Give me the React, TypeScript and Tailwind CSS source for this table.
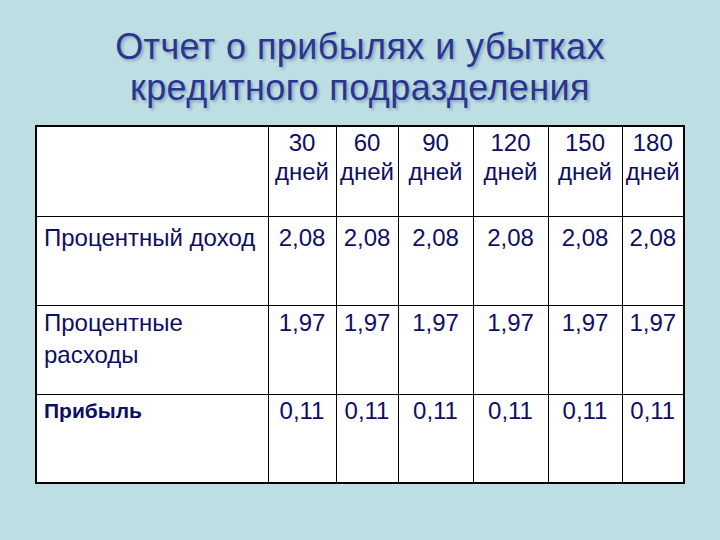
const cols = [
  { n: '30', w: 'w-[68px]' },
  { n: '60', w: 'w-[62px]' },
  { n: '90', w: 'w-[75px]' },
  { n: '120', w: 'w-[75px]' },
  { n: '150', w: 'w-[74px]' },
  { n: '180', w: 'w-[62px]' },
]

// pad = top padding + line height for every cell in the row
const rows = [
  { label: <>Процентный доход</>, value: '2,08', pad: 'pt-[7px] leading-[27px]', labelCls: '' },
  { label: <>Процентные<br />расходы</>, value: '1,97', pad: 'pt-[1px] leading-[32px]', labelCls: '' },
  { label: <>Прибыль</>, value: '0,11', pad: 'pt-[2px] leading-[27px]', labelCls: 'font-bold text-[21px]' },
]

export default function App() {
  return (
    <div
      className="w-[720px] h-[540px] bg-[#bddfe4] flex flex-col items-center pt-[26px]"
      style={{ fontFamily: '"Liberation Sans", Arial, sans-serif' }}
    >
      <h1 className="text-[36px] leading-[41px] tracking-[0.4px] text-[#2b358f] text-center [text-shadow:2px_2px_3px_rgba(40,60,120,0.35)]">
        Отчет о прибылях и убытках
        <br />
        кредитного подразделения
      </h1>

      <table className="mt-[17px] table-fixed border-collapse border-2 border-black bg-white text-[#0e0e66] text-[24px]">
        <colgroup>
          <col className="w-[232px]" />
          {cols.map((c) => (
            <col key={c.n} className={c.w} />
          ))}
        </colgroup>
        <thead>
          <tr className="h-[90px]">
            <th className="border border-black" />
            {cols.map((c) => (
              <th key={c.n} className="border border-black align-top pt-[1px] leading-[29px] font-normal text-center">
                {c.n}
                <br />
                дней
              </th>
            ))}
          </tr>
        </thead>
        <tbody>
          {rows.map((r, i) => (
            <tr key={i} className="h-[89px]">
              <td className={`border border-black align-top pl-[7px] ${r.pad} ${r.labelCls}`}>
                {r.label}
              </td>
              {cols.map((c) => (
                <td key={c.n} className={`border border-black align-top text-center ${r.pad}`}>
                  {r.value}
                </td>
              ))}
            </tr>
          ))}
        </tbody>
      </table>
    </div>
  )
}
